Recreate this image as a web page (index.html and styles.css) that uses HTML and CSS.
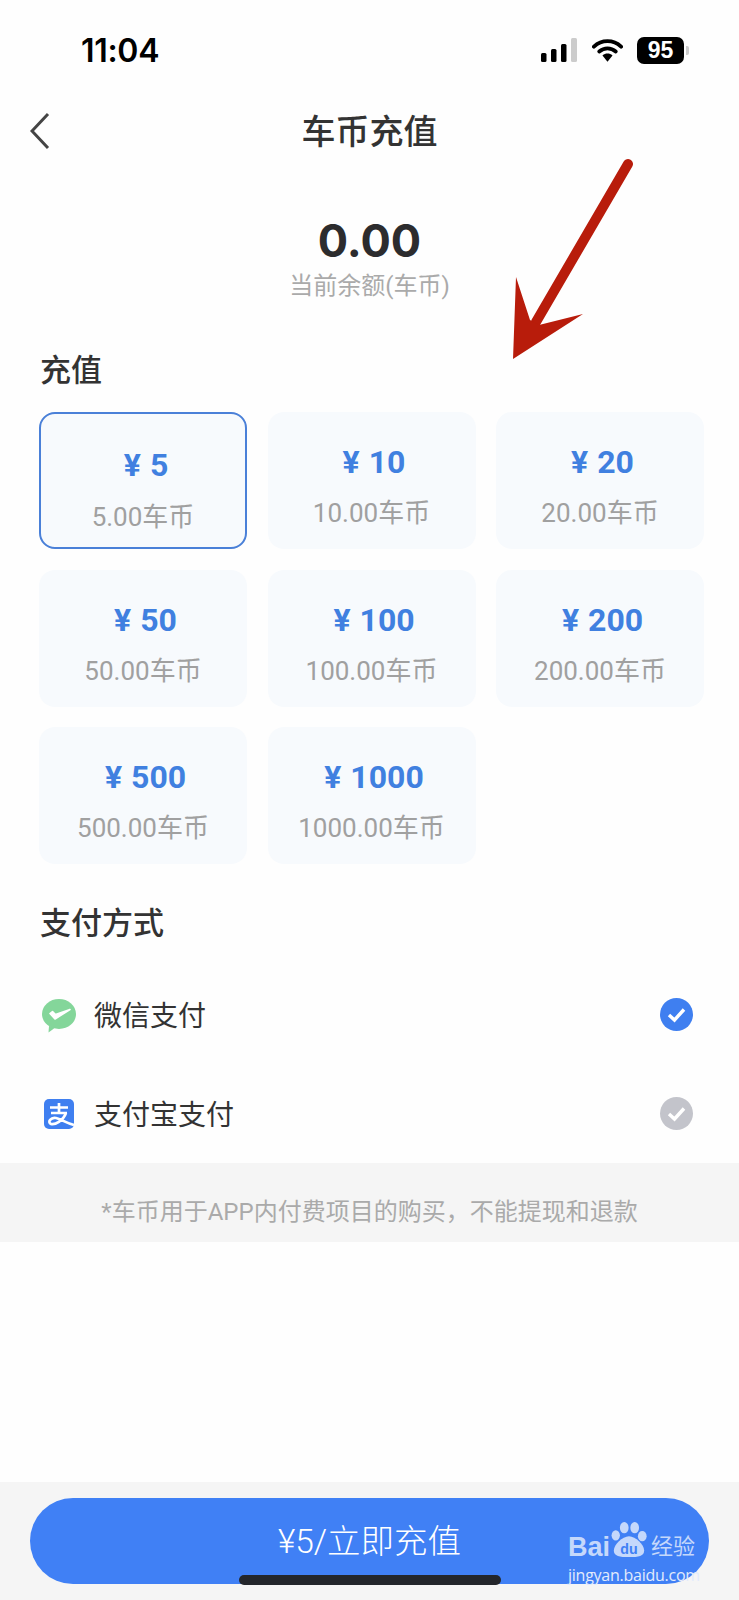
FILE: index.html
```html
<!DOCTYPE html>
<html lang="zh-CN">
<head>
  <meta charset="UTF-8" />
  <meta name="viewport" content="width=device-width, initial-scale=1.0"/>
  <title>车币充值</title>
  <link rel="stylesheet" href="styles.css">
</head>
<body>
  <div class="page">

    <div class="status-bar">
      <span class="time">11:04</span>
      <div class="status-icons">
        <svg class="signal" width="36" height="24" viewBox="0 0 36 24">
          <rect x="0" y="15" width="5.5" height="9" rx="1.5" fill="#000"/>
          <rect x="10" y="11" width="5.5" height="13" rx="1.5" fill="#000"/>
          <rect x="20" y="6" width="5.5" height="18" rx="1.5" fill="#000"/>
          <rect x="30" y="0" width="6" height="24" rx="1.5" fill="#ccc"/>
        </svg>
        <svg class="wifi" width="31" height="24" viewBox="0 0 32 24">
          <path d="M2 8.5C10 1 22 1 30 8.5" fill="none" stroke="#000" stroke-width="4" stroke-linecap="round"/>
          <path d="M7.5 13.5C12.5 9.3 19.5 9.3 24.5 13.5" fill="none" stroke="#000" stroke-width="4" stroke-linecap="round"/>
          <path d="M10.8 17.6C14 15 18 15 21.2 17.6L16 24Z" fill="#000"/>
        </svg>
        <div class="battery"><span class="battery-level">95</span><i class="battery-cap"></i></div>
      </div>
    </div>

    <div class="nav-bar">
      <svg class="back" width="20" height="38" viewBox="0 0 20 38">
        <path d="M18 2L2 19L18 36" fill="none" stroke="#444" stroke-width="3"/>
      </svg>
      <h1>车币充值</h1>
    </div>

    <div class="balance">
      <div class="balance-num">0.00</div>
      <div class="balance-label">当前余额(车币)</div>
    </div>

    <h2 class="section-title first">充值</h2>
    <div class="card-grid">
      <div class="card selected"><div class="price">¥ 5</div><div class="coins">5.00车币</div></div>
      <div class="card"><div class="price">¥ 10</div><div class="coins">10.00车币</div></div>
      <div class="card"><div class="price">¥ 20</div><div class="coins">20.00车币</div></div>
      <div class="card"><div class="price">¥ 50</div><div class="coins">50.00车币</div></div>
      <div class="card"><div class="price">¥ 100</div><div class="coins">100.00车币</div></div>
      <div class="card"><div class="price">¥ 200</div><div class="coins">200.00车币</div></div>
      <div class="card"><div class="price">¥ 500</div><div class="coins">500.00车币</div></div>
      <div class="card"><div class="price">¥ 1000</div><div class="coins">1000.00车币</div></div>
    </div>

    <h2 class="section-title second">支付方式</h2>
    <div class="pay-row">
      <svg class="pay-icon wechat" width="34" height="34" viewBox="0 0 34 34">
        <ellipse cx="17" cy="15" rx="17" ry="15" fill="#84d69a"/>
        <path d="M7 27L6.5 33.5L14 28Z" fill="#84d69a"/>
        <path d="M8 14.5L13 20L28 10.5L13.5 15.5L10.5 12.5Z" fill="#fff" stroke="#fff" stroke-width="1.6" stroke-linejoin="round"/>
      </svg>
      <span class="pay-name">微信支付</span>
      <svg class="pay-check" width="33" height="33" viewBox="0 0 33 33">
        <circle cx="16.5" cy="16.5" r="16.5" fill="#3f7ff0"/>
        <path d="M9 17L14.5 22L24 11.5" fill="none" stroke="#fff" stroke-width="3.4"/>
      </svg>
    </div>
    <div class="pay-row">
      <svg class="pay-icon" width="34" height="34" viewBox="0 0 34 34">
        <rect x="2" y="2" width="30" height="30" rx="5" fill="#3f7ff0"/>
        <path d="M8 10.5H26M17 6V16M9 16H25M24 16C21 24 13 28 9 27C5 25 9 20 14 21C19 22 24 26 32 28" fill="none" stroke="#fff" stroke-width="2.7"/>
      </svg>
      <span class="pay-name">支付宝支付</span>
      <svg class="pay-check" width="33" height="33" viewBox="0 0 33 33">
        <circle cx="16.5" cy="16.5" r="16.5" fill="#c3c4cb"/>
        <path d="M9 17L14.5 22L24 11.5" fill="none" stroke="#fff" stroke-width="3.4"/>
      </svg>
    </div>

    <div class="notice">*车币用于APP内付费项目的购买，不能提现和退款</div>

    <div class="bottom-bar">
      <button type="button" class="pay-btn">¥5/立即充值</button>
    </div>

    <!-- red arrow drawn over the screenshot -->
    <svg class="arrow" width="130" height="210" viewBox="0 0 130 210">
      <path d="M118 14L26 172" fill="none" stroke="#b81c0b" stroke-width="10" stroke-linecap="round"/>
      <path d="M6 127L20 170L29 175L73 164L3 209Z" fill="#b81c0b"/>
    </svg>

    <div class="home-bar"></div>

    <div class="watermark">
      <div class="wm-top">
        <span class="wm-bai">Bai</span>
        <svg class="wm-paw" width="40" height="36" viewBox="0 0 40 38">
          <ellipse cx="15" cy="6" rx="4.6" ry="6" fill="#c5d8fb"/>
          <ellipse cx="26" cy="6" rx="4.6" ry="6" fill="#c5d8fb"/>
          <ellipse cx="6" cy="14" rx="4.4" ry="5.4" fill="#c5d8fb"/>
          <ellipse cx="34" cy="15" rx="4.6" ry="5.4" fill="#c5d8fb"/>
          <path d="M20 15C13 15 4 24 4 30C4 36 10 37 20 37C30 37 36 36 36 30C36 24 27 15 20 15Z" fill="#c5d8fb"/>
          <text x="20" y="34" text-anchor="middle" class="wm-du">du</text>
        </svg>
        <span class="wm-jy">经验</span>
      </div>
      <div class="wm-url">jingyan.baidu.com</div>
    </div>

  </div>
</body>
</html>
```

FILE: styles.css
```css
* { box-sizing: border-box; }
body {
  margin: 0;
  background: #fff;
  font-family: Roboto, 'Noto Sans CJK SC', sans-serif;
}
.page {
  position: relative;
  width: 739px;
  height: 1600px;
  overflow: hidden;
  display: flex;
  flex-direction: column;
  background: #fefefe;
}

/* status bar */
.status-bar {
  height: 100px;
  flex: none;
  display: flex;
  align-items: center;
  justify-content: space-between;
  padding: 0 55px 0 81px;
}
.time {
  font-family: Inter, sans-serif;
  font-size: 32px;
  font-weight: 600;
  letter-spacing: -0.3px;
  color: #000;
}
.status-icons {
  display: flex;
  align-items: center;
}
.wifi { margin-left: 15px; }
.battery {
  position: relative;
  width: 47px;
  height: 27px;
  margin-left: 14px;
  background: #000;
  border-radius: 7px;
  display: flex;
  align-items: center;
  justify-content: center;
}
.battery-level {
  font-family: 'Liberation Sans', sans-serif;
  font-size: 23px;
  font-weight: 700;
  color: #fff;
}
.battery-cap {
  position: absolute;
  right: -5px;
  top: 9px;
  width: 3px;
  height: 9px;
  background: #ccc;
  border-radius: 0 2px 2px 0;
}

/* nav */
.nav-bar {
  height: 62px;
  flex: none;
  position: relative;
  display: flex;
  align-items: center;
  justify-content: center;
}
.back {
  position: absolute;
  left: 30px;
  top: 12px;
}
h1 {
  margin: 0 0 4px;
  font-size: 34px;
  font-weight: 500;
  color: #333;
}

/* balance */
.balance {
  flex: none;
  margin-top: 50px;
  text-align: center;
}
.balance-num {
  font-family: Inter, sans-serif;
  font-size: 45px;
  font-weight: 700;
  line-height: 58px;
  color: #2c2c2e;
}
.balance-label {
  font-size: 24px;
  line-height: 32px;
  color: #aaa;
}

.section-title {
  flex: none;
  margin: 0;
  padding-left: 40px;
  font-size: 31px;
  font-weight: 500;
  line-height: 40px;
  color: #333;
}
.section-title.first { margin-top: 49px; }
.section-title.second { margin-top: 40px; }

/* recharge cards */
.card-grid {
  flex: none;
  margin-top: 21px;
  padding: 0 35px 0 39px;
  display: grid;
  grid-template-columns: repeat(3, 1fr);
  grid-auto-rows: 137px;
  gap: 20.5px;
}
.card {
  background: #f7fafd;
  border-radius: 16px;
  padding-top: 30px;
  text-align: center;
}
.card.selected {
  border: 2.5px solid #4a80d8;
  padding-top: 30.5px;
}
.price {
  font-size: 32px;
  font-weight: 700;
  line-height: 40px;
  color: #4080e0;
  word-spacing: 1px;
  padding-left: 5px;
}
.card.selected .price { padding-left: 6px; }
.coins {
  margin-top: 14px;
  font-size: 26px;
  line-height: 34px;
  color: #a0a0a0;
}
.card.selected .coins { margin-top: 15px; }

/* pay methods */
.pay-row {
  flex: none;
  height: 99px;
  display: flex;
  align-items: center;
  padding: 0 46px 0 42px;
}
.section-title.second + .pay-row { margin-top: 21px; }
.wechat { margin-top: 3px; }
.pay-name {
  margin: 0 0 2px 18px;
  font-size: 28px;
  color: #333;
}
.pay-check { margin-left: auto; }

.notice {
  flex: none;
  height: 79px;
  padding-top: 14px;
  background: #f5f5f5;
  display: flex;
  align-items: center;
  justify-content: center;
  font-size: 24px;
  color: #aaa;
}

/* bottom */
.bottom-bar {
  margin-top: auto;
  height: 118px;
  flex: none;
  background: #f5f5f5;
  padding: 16px 30px 0;
}
.pay-btn {
  display: block;
  width: 100%;
  height: 86px;
  border: none;
  border-radius: 43px;
  background: #4080f5;
  color: #fff;
  font-family: Roboto, 'Noto Sans CJK SC', sans-serif;
  font-size: 33.5px;
  font-weight: 300;
  padding: 0 0 6px;
}
.home-bar {
  position: absolute;
  left: 239px;
  top: 1575px;
  width: 262px;
  height: 10px;
  background: #23262b;
  border-radius: 5px;
}

.arrow {
  position: absolute;
  left: 510px;
  top: 150px;
}

/* baidu watermark */
.watermark {
  position: absolute;
  left: 568px;
  top: 1522px;
  width: 132px;
}
.wm-top {
  display: flex;
  align-items: flex-end;
  height: 36px;
}
.wm-bai {
  font-family: 'Liberation Sans', sans-serif;
  font-size: 27px;
  font-weight: 700;
  line-height: 21px;
  color: #c5d8fb;
}
.wm-paw { flex: none; margin-left: -1px; }
.wm-du {
  font-family: 'Liberation Sans', sans-serif;
  font-size: 15px;
  font-weight: 700;
  fill: #4080f5;
}
.wm-jy {
  margin-left: 2px;
  font-size: 22px;
  line-height: 22px;
  white-space: nowrap;
  color: #c5d8fb;
}
.wm-url {
  margin-top: 7px;
  font-family: 'Open Sans', sans-serif;
  font-size: 16px;
  letter-spacing: -0.25px;
  line-height: 20px;
  color: #e2ebfc;
  white-space: nowrap;
}
```
